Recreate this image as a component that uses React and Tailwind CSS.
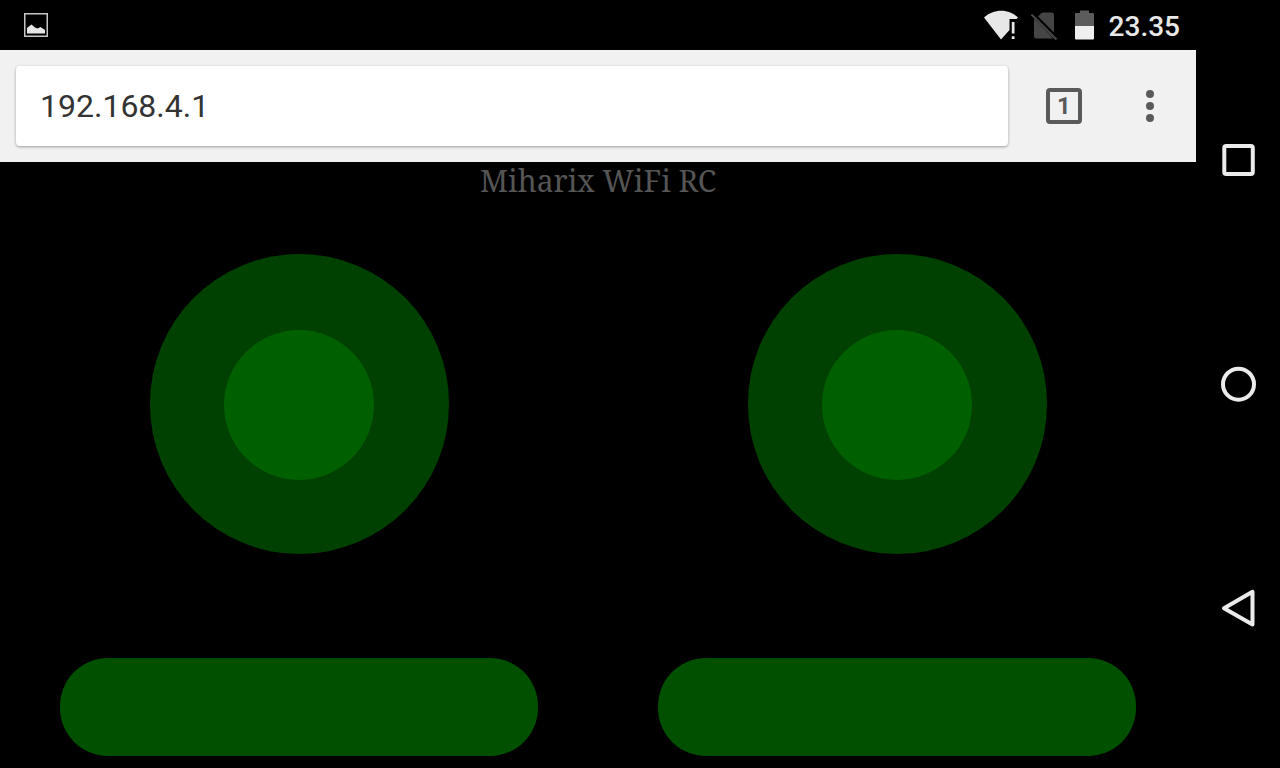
import { useState } from "react";

function StatusBar() {
  return (
    <header className="flex h-[50px] items-center justify-between bg-black pr-4 pl-6">
      <svg className="size-6" viewBox="0 0 24 24" aria-hidden="true">
        <rect x="0.75" y="0.75" width="22.5" height="22.5" fill="none" stroke="#c4c4c4" strokeWidth="1.5" />
        <path d="M3 20.500V15L5.500 13L7.500 11.500L11 14.500L13.500 15.500L16.500 14L21 17V20.500Z" fill="#e6e6e6" />
      </svg>
      <div className="flex items-center">
        <svg className="h-[30px] w-9" viewBox="0 0 36 30" role="img" aria-label="Wi-Fi without internet">
          <path d="M1 7.500C10.500 -1.500 26 -1.500 35 7.500L33.500 9H26.500V20L18 29.500Z" fill="#e8e8e8" />
          <path d="M28.800 12H31.500V23.500H28.800ZM28.800 26.300H31.500V29H28.800Z" fill="#e8e8e8" />
        </svg>
        <svg className="ml-3 h-[30px] w-7" viewBox="0 0 28 30" role="img" aria-label="No SIM card">
          <path d="M3 8.500L22 28Q21.500 28.500 20.500 28.500H5.500Q3 28.500 3 26V8.500Z" fill="#454545" />
          <path d="M7 6.500L10 3.500Q11 2.500 12.500 2.500H20.500Q23 2.500 23 5V23Z" fill="#454545" />
          <path d="M2 3L27 28" stroke="#000000" strokeWidth="2" fill="none" />
          <path d="M0.500 4.500L25.500 29.500" stroke="#454545" strokeWidth="2.200" fill="none" />
        </svg>
        <svg className="ml-4 h-[30px] w-5" viewBox="0 0 20 30" role="img" aria-label="Battery at half">
          <path d="M0 4Q0 3 1 3H5V0.500H14V3H18Q19 3 19 4V16H0Z" fill="#5c5c5c" />
          <path d="M0 16H19V28.500Q19 29.500 18 29.500H1Q0 29.500 0 28.500Z" fill="#efefef" />
        </svg>
        <time className="ml-3.5 pt-1 text-[28px] leading-8 font-medium text-[#e8e8e8]">23.35</time>
      </div>
    </header>
  );
}

function BrowserBar() {
  const [address, setAddress] = useState("192.168.4.1");
  return (
    <div className="flex h-28 items-center bg-[#f1f1f1] px-4">
      <input
        aria-label="Address"
        value={address}
        onChange={(e) => setAddress(e.target.value)}
        className="h-20 min-w-0 flex-1 rounded-sm bg-white px-6 text-[32px] text-[#333333] shadow-[0_1px_3px_rgba(0,0,0,0.35)] outline-none"
      />
      <button type="button" aria-label="Open tabs: 1" className="flex h-20 w-28 items-center justify-center">
        <span className="flex size-9 items-center justify-center rounded-sm border-4 border-[#5a5a5a] text-2xl font-bold text-[#5a5a5a]">
          1
        </span>
      </button>
      <button type="button" aria-label="Menu" className="flex h-20 w-15 flex-col items-center justify-center gap-1">
        <span className="size-2 rounded-full bg-[#5a5a5a]" />
        <span className="size-2 rounded-full bg-[#5a5a5a]" />
        <span className="size-2 rounded-full bg-[#5a5a5a]" />
      </button>
    </div>
  );
}

function Controls({ side }) {
  return (
    <div className="flex flex-col items-center">
      <div className="flex h-[300px] w-1/2 justify-center rounded-full bg-[#004000] pt-19">
        <button type="button" aria-label={`${side} stick`} className="size-[150px] shrink-0 rounded-full bg-[#006000]" />
      </div>
      <button type="button" aria-label={`${side} action`} className="mt-26 h-[98px] w-4/5 rounded-[48px] bg-[#005000]" />
    </div>
  );
}

function NavigationBar() {
  return (
    <nav aria-label="System" className="flex w-21 shrink-0 flex-col justify-center bg-black">
      <button type="button" aria-label="Recent apps" className="flex h-56 items-center justify-center">
        <svg className="size-10" viewBox="0 0 40 40" fill="none" stroke="#ebebeb" strokeWidth="4">
          <rect x="6.300" y="6" width="28.500" height="28" rx="2" />
        </svg>
      </button>
      <button type="button" aria-label="Home" className="flex h-56 items-center justify-center">
        <svg className="size-10" viewBox="0 0 40 40" fill="none" stroke="#ebebeb" strokeWidth="4">
          <circle cx="20.500" cy="20.200" r="15.500" />
        </svg>
      </button>
      <button type="button" aria-label="Back" className="flex h-56 items-center justify-center">
        <svg className="size-10" viewBox="0 0 40 40" fill="none" stroke="#ebebeb" strokeWidth="4" strokeLinejoin="round">
          <path d="M34.500 3.800V36.500L6 20.200Z" />
        </svg>
      </button>
    </nav>
  );
}

export default function App() {
  return (
    <div className="flex min-h-screen bg-black font-['Roboto',sans-serif]">
      <div className="flex min-w-0 flex-1 flex-col">
        <StatusBar />
        <BrowserBar />
        <main>
          <h1 className="pt-0.5 text-center font-['Noto_Serif','DejaVu_Serif_Condensed','Liberation_Serif',serif] text-[30px] leading-[34px] text-[#555555]">
            Miharix WiFi RC
          </h1>
          <div className="mt-14 grid grid-cols-2">
            <Controls side="Left" />
            <Controls side="Right" />
          </div>
        </main>
      </div>
      <NavigationBar />
    </div>
  );
}
